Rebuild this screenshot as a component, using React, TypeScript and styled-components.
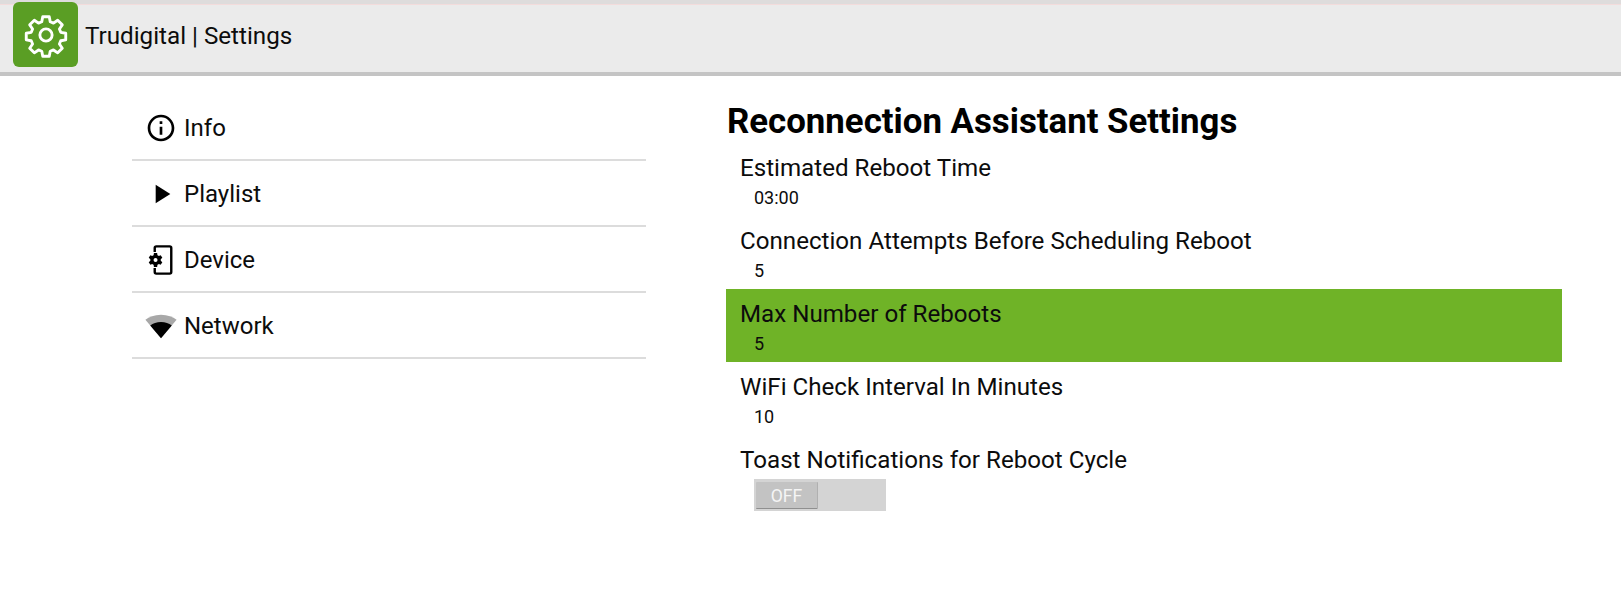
import React from "react";
import styled, { createGlobalStyle } from "styled-components";

const Global = createGlobalStyle`
  html, body { margin: 0; padding: 0; background: #fff; }
  body { font-family: Roboto, "Liberation Sans", sans-serif; color: #0c0c0c; }
`;

const Page = styled.div`
  width: 1621px;
  height: 593px;
  overflow: hidden;
  background: #fff;
`;

const TopStrip = styled.div`
  height: 5px;
  background: #dedcdc;
  border-bottom: 1px solid #f3dcdc;
  box-sizing: border-box;
`;

const Header = styled.header`
  height: 67px;
  background: #ebebeb;
  border-bottom: 4px solid #c4c4c4;
  display: flex;
  align-items: flex-start;
  padding-left: 13px;
  gap: 7px;
`;

const LogoTile = styled.div`
  width: 65px;
  height: 65px;
  margin-top: -3px;
  border-radius: 6px;
  background: #5a9e24;
  display: flex;
  align-items: center;
  justify-content: center;
`;

const HeaderTitle = styled.div`
  font-size: 24.2px;
  line-height: 28px;
  margin-top: 17px;
`;

const Body = styled.main`
  display: flex;
  align-items: flex-start;
  padding-left: 132px;
`;

const Sidebar = styled.nav`
  width: 514px;
  margin-top: 19px;
  flex: none;
`;

const NavItem = styled.div`
  height: 62px;
  padding-top: 2px;
  border-bottom: 2px solid #dcdcdc;
  display: flex;
  align-items: center;
  font-size: 24px;
`;

const NavIcon = styled.span`
  width: 52px;
  padding-left: 14px;
  box-sizing: border-box;
  flex: none;
  display: flex;
  align-items: center;
`;

const Content = styled.section`
  width: 836px;
  margin-left: 80px;
  flex: none;
`;

const Title = styled.h1`
  margin: 24px 0 0 1px;
  font-size: 34.8px;
  line-height: 43px;
  font-weight: 700;
  color: #000;
`;

const Row = styled.div<{ $active?: boolean }>`
  height: 73px;
  box-sizing: border-box;
  padding: 0 0 0 14px;
  background: ${(p) => (p.$active ? "#6fb327" : "transparent")};
`;

const Label = styled.div`
  font-size: 24.15px;
  line-height: 32px;
  padding-top: 9px;
`;

const Value = styled.div`
  font-size: 18px;
  line-height: 20px;
  padding: 4px 0 0 14px;
`;

const Toggle = styled.div`
  width: 132px;
  height: 32px;
  margin: 3px 0 0 14px;
  background: #d4d4d4;
  padding: 3px 2px 2px;
  box-sizing: border-box;
`;

const Thumb = styled.div`
  width: 62px;
  height: 27px;
  box-sizing: border-box;
  background: #c3c3c3;
  border-bottom: 1px solid #8f8f8f;
  border-right: 1px solid #b0b0b0;
  border-radius: 1px;
  color: #f5f5f5;
  font-size: 17.6px;
  line-height: 28px;
  text-align: center;
`;

const rows = [
  { label: "Estimated Reboot Time", value: "03:00" },
  { label: "Connection Attempts Before Scheduling Reboot", value: "5" },
  { label: "Max Number of Reboots", value: "5", active: true },
  { label: "WiFi Check Interval In Minutes", value: "10" },
];

const GearIcon = () => (
  <svg width="46" height="46" viewBox="0 0 24 24" fill="none" stroke="#fff" strokeWidth="1.5" strokeLinecap="round" strokeLinejoin="round">
    <path d="M10.3 2.5h3.4l.5 2.6 1.7.7 2.2-1.5 2.4 2.4-1.5 2.2.7 1.7 2.6.5v3.4l-2.6.5-.7 1.7 1.5 2.2-2.4 2.4-2.2-1.5-1.7.7-.5 2.6h-3.4l-.5-2.6-1.7-.7-2.2 1.5-2.4-2.4 1.5-2.2-.7-1.7-2.6-.5v-3.4l2.6-.5.7-1.7-1.5-2.2 2.4-2.4 2.2 1.5 1.7-.7z" />
    <circle cx="12" cy="12" r="3.2" />
  </svg>
);

const InfoIcon = () => (
  <svg width="32" height="32" viewBox="0 0 24 24" fill="#000" style={{ marginLeft: -1 }}>
    <path d="M11 7h2v2h-2zm0 4h2v6h-2zm1-9C6.48 2 2 6.48 2 12s4.48 10 10 10 10-4.48 10-10S17.52 2 12 2zm0 18c-4.41 0-8-3.59-8-8s3.59-8 8-8 8 3.59 8 8-3.59 8-8 8z" />
  </svg>
);

const PlayIcon = () => (
  <svg width="32" height="32" viewBox="0 0 24 24" fill="#000" style={{ marginLeft: -1 }}>
    <path d="M8 5v14l11-7z" />
  </svg>
);

const DeviceIcon = () => (
  <svg width="32" height="32" viewBox="0 0 24 24" style={{ marginLeft: 1 }}>
    <path d="M5.8 6V3c0-.7.5-1.2 1.2-1.2h10c.7 0 1.2.5 1.2 1.2v18c0 .7-.5 1.2-1.2 1.2H7c-.7 0-1.2-.5-1.2-1.2v-3" fill="none" stroke="#000" strokeWidth="1.8" />
    <path d="M10.3 12.6c.03-.2.05-.4.05-.6s-.02-.4-.05-.6l1.2-1-1.2-2-1.45.58c-.3-.24-.65-.44-1-.6L7.6 6.8H5.2l-.24 1.58c-.36.16-.7.36-1 .6L2.5 8.4l-1.2 2 1.22 1c-.03.2-.05.4-.05.6s.02.4.05.6l-1.22 1 1.2 2 1.46-.58c.3.24.64.44 1 .6l.24 1.58h2.4l.24-1.58c.36-.16.7-.36 1-.6l1.45.58 1.2-2zM6.4 13.5a1.5 1.5 0 1 1 0-3 1.5 1.5 0 0 1 0 3z" fill="#000" />
  </svg>
);

const WifiIcon = () => (
  <svg width="34" height="34" viewBox="0 0 24 24" style={{ marginLeft: -2 }}>
    <path d="M12 4C7.3 4 3.6 5.5 1 7.5l11 13.2L23 7.5C20.4 5.5 16.7 4 12 4z" fill="#a8a8a8" />
    <path d="M4.4 11.6 12 20.7l7.6-9.1C17.6 10.2 15.1 9.2 12 9.2s-5.6 1-7.6 2.4z" fill="#000" />
  </svg>
);

const navItems = [
  { label: "Info", icon: <InfoIcon /> },
  { label: "Playlist", icon: <PlayIcon /> },
  { label: "Device", icon: <DeviceIcon /> },
  { label: "Network", icon: <WifiIcon /> },
];

export default function App() {
  return (
    <Page>
      <Global />
      <TopStrip />
      <Header>
        <LogoTile>
          <GearIcon />
        </LogoTile>
        <HeaderTitle>Trudigital | Settings</HeaderTitle>
      </Header>
      <Body>
        <Sidebar>
          {navItems.map((n) => (
            <NavItem key={n.label}>
              <NavIcon>{n.icon}</NavIcon>
              {n.label}
            </NavItem>
          ))}
        </Sidebar>
        <Content>
          <Title>Reconnection Assistant Settings</Title>
          {rows.map((r) => (
            <Row key={r.label} $active={r.active}>
              <Label>{r.label}</Label>
              <Value>{r.value}</Value>
            </Row>
          ))}
          <Row>
            <Label>Toast Notifications for Reboot Cycle</Label>
            <Toggle>
              <Thumb>OFF</Thumb>
            </Toggle>
          </Row>
        </Content>
      </Body>
    </Page>
  );
}
